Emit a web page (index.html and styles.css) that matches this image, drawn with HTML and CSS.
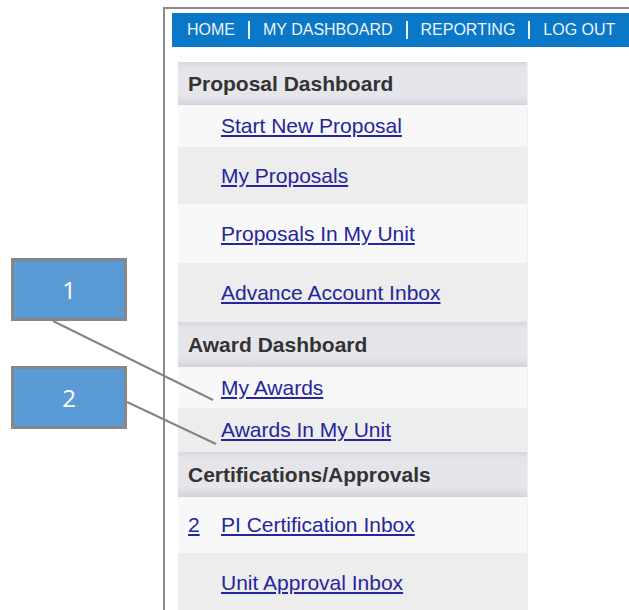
FILE: index.html
```html
<!DOCTYPE html>
<html lang="en">
<head>
<meta charset="utf-8">
<title>Dashboard</title>
<link rel="stylesheet" href="styles.css">
</head>
<body>
<div class="frame">
  <nav class="topnav">
    <a href="#">HOME</a><span class="sep"></span>
    <a href="#">MY DASHBOARD</a><span class="sep"></span>
    <a href="#">REPORTING</a><span class="sep"></span>
    <a href="#">LOG OUT</a>
  </nav>

  <div class="panel">
    <div class="section-head">Proposal Dashboard</div>
    <div class="row light h42"><span class="count"></span><a href="#">Start New Proposal</a></div>
    <div class="row grey h57"><span class="count"></span><a href="#">My Proposals</a></div>
    <div class="row light h59"><span class="count"></span><a href="#">Proposals In My Unit</a></div>
    <div class="row grey h59"><span class="count"></span><a href="#">Advance Account Inbox</a></div>

    <div class="section-head">Award Dashboard</div>
    <div class="row light h41"><span class="count"></span><a href="#">My Awards</a></div>
    <div class="row grey h44"><span class="count"></span><a href="#">Awards In My Unit</a></div>

    <div class="section-head">Certifications/Approvals</div>
    <div class="row light h56"><a class="count" href="#">2</a><a href="#">PI Certification Inbox</a></div>
    <div class="row grey h59"><span class="count"></span><a href="#">Unit Approval Inbox</a></div>
  </div>
</div>

<svg class="leaders" width="629" height="610" viewBox="0 0 629 610">
  <line x1="53" y1="321" x2="213" y2="400"/>
  <line x1="127" y1="402" x2="216" y2="444"/>
</svg>
<div class="callout c1">1</div>
<div class="callout c2">2</div>
</body>
</html>
```
FILE: styles.css
```css
html, body {
  margin: 0;
  padding: 0;
  background: #ffffff;
}

body {
  font-family: "Liberation Sans", Arial, sans-serif;
  width: 629px;
  height: 610px;
  overflow: hidden;
  position: relative;
}

/* framed page area */
.frame {
  margin: 7px 0 0 163px;
  border-left: 2px solid #8a8a8a;
  border-top: 2px solid #8a8a8a;
  padding: 4px 0 0 7px;
  height: 620px;
}

/* top navigation bar */
.topnav {
  height: 34px;
  background: #0b77c7;
  display: flex;
  align-items: center;
  padding-left: 15px;
  white-space: nowrap;
}

.topnav a {
  color: #eef4fb;
  font-size: 16px;
  text-decoration: none;
}

.topnav .sep {
  width: 2px;
  height: 18px;
  background: #eef4fb;
  margin: 0 13px 0 13px;
}

/* dashboard panel */
.panel {
  margin: 15px 0 0 6px;
  width: 349px;
  box-shadow: 1px 0 0 #f0f0f2;
}

.section-head {
  height: 45px;
  display: flex;
  align-items: center;
  padding-left: 10px;
  font-size: 21px;
  font-weight: bold;
  color: #333333;
  background: linear-gradient(#d7d7de 0%, #e4e4ea 14%, #e5e5eb 78%, #d3d3da 100%);
}

.section-head:first-child {
  height: 43px;
}

.row {
  display: flex;
  align-items: center;
  padding-left: 10px;
  font-size: 21px;
}

.row a {
  color: #25259e;
  text-decoration: underline;
  text-decoration-thickness: 1.5px;
  text-underline-offset: 2px;
}

.row .count {
  width: 33px;
  flex: none;
}

.light { background: #f8f8f8; }
.grey  { background: #ededed; }

.h41 { height: 41px; }
.h42 { height: 42px; }
.h44 { height: 44px; }
.h56 { height: 56px; }
.h57 { height: 57px; }
.h59 { height: 59px; }

/* annotation callouts laid over the page */
.leaders {
  position: absolute;
  left: 0;
  top: 0;
  pointer-events: none;
}

.leaders line {
  stroke: #858585;
  stroke-width: 2;
}

.callout {
  position: absolute;
  left: 11px;
  width: 110px;
  height: 57px;
  border: 3px solid #868686;
  background: #5b9bd5;
  color: #ffffff;
  font-family: "Open Sans", "Liberation Sans", sans-serif;
  font-size: 24px;
  display: flex;
  align-items: center;
  justify-content: center;
}

.c1 { top: 258px; }
.c2 { top: 366px; }
```
